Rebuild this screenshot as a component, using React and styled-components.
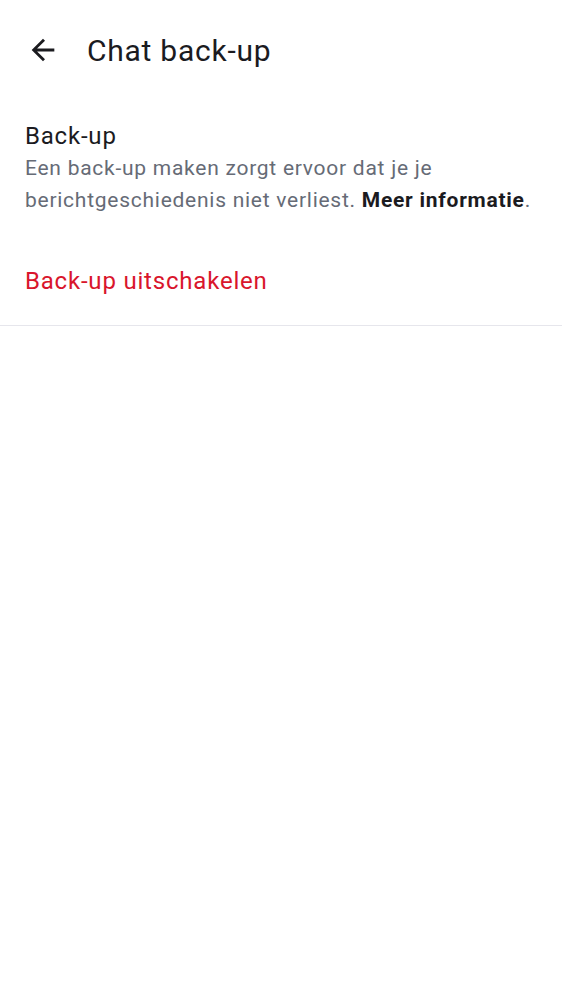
import React from "react";
import styled, { createGlobalStyle } from "styled-components";

const Global = createGlobalStyle`
  html, body { margin: 0; padding: 0; background: #fff; }
  body { font-family: Roboto, "Noto Sans", sans-serif; -webkit-font-smoothing: antialiased; }
`;

const Page = styled.div`
  width: 562px;
  min-height: 1000px;
  background: #fff;
  display: flex;
  flex-direction: column;
`;

const TopBar = styled.header`
  height: 100px;
  display: flex;
  align-items: center;
  padding: 0 0 0 26px;
  gap: 27px;
`;

const BackButton = styled.button`
  width: 34px;
  height: 34px;
  padding: 0;
  border: none;
  background: none;
  display: flex;
  align-items: center;
  justify-content: center;
  color: #1b1b1f;
`;

const Title = styled.h1`
  margin: 0;
  font-size: 30px;
  font-weight: 400;
  color: #1b1b1f;
  letter-spacing: 0.75px;
`;

const Section = styled.section`
  padding: 21px 25px 0;
  display: flex;
  flex-direction: column;
`;

const ItemTitle = styled.div`
  font-size: 24px;
  line-height: 31px;
  letter-spacing: 0.8px;
  color: #1b1b1f;
`;

const ItemText = styled.p`
  margin: 0;
  font-size: 21px;
  line-height: 32px;
  letter-spacing: 0.74px;
  color: #666b76;
`;

const Strong = styled.strong`
  font-weight: 700;
  color: #1b1b1f;
`;

const Action = styled.button`
  margin: 0;
  padding: 49px 25px 28px;
  border: none;
  background: none;
  text-align: left;
  font-family: inherit;
  font-size: 24px;
  line-height: 32px;
  letter-spacing: 0.8px;
  color: ${(p) => p.$color};
  border-bottom: 1px solid #e6e6ec;
  cursor: pointer;
`;

export default function App() {
  return (
    <Page>
      <Global />
      <TopBar>
        <BackButton aria-label="Terug">
          <svg width="34" height="34" viewBox="0 0 24 24" fill="currentColor">
            <path d="M20 11H7.83l5.59-5.59L12 4l-8 8 8 8 1.41-1.41L7.83 13H20v-2z" />
          </svg>
        </BackButton>
        <Title>Chat back-up</Title>
      </TopBar>
      <Section>
        <ItemTitle>Back-up</ItemTitle>
        <ItemText>
          Een back-up maken zorgt ervoor dat je je berichtgeschiedenis niet verliest.{" "}
          <Strong>Meer informatie</Strong>.
        </ItemText>
      </Section>
      <Action $color="#d9152c">Back-up uitschakelen</Action>
    </Page>
  );
}
